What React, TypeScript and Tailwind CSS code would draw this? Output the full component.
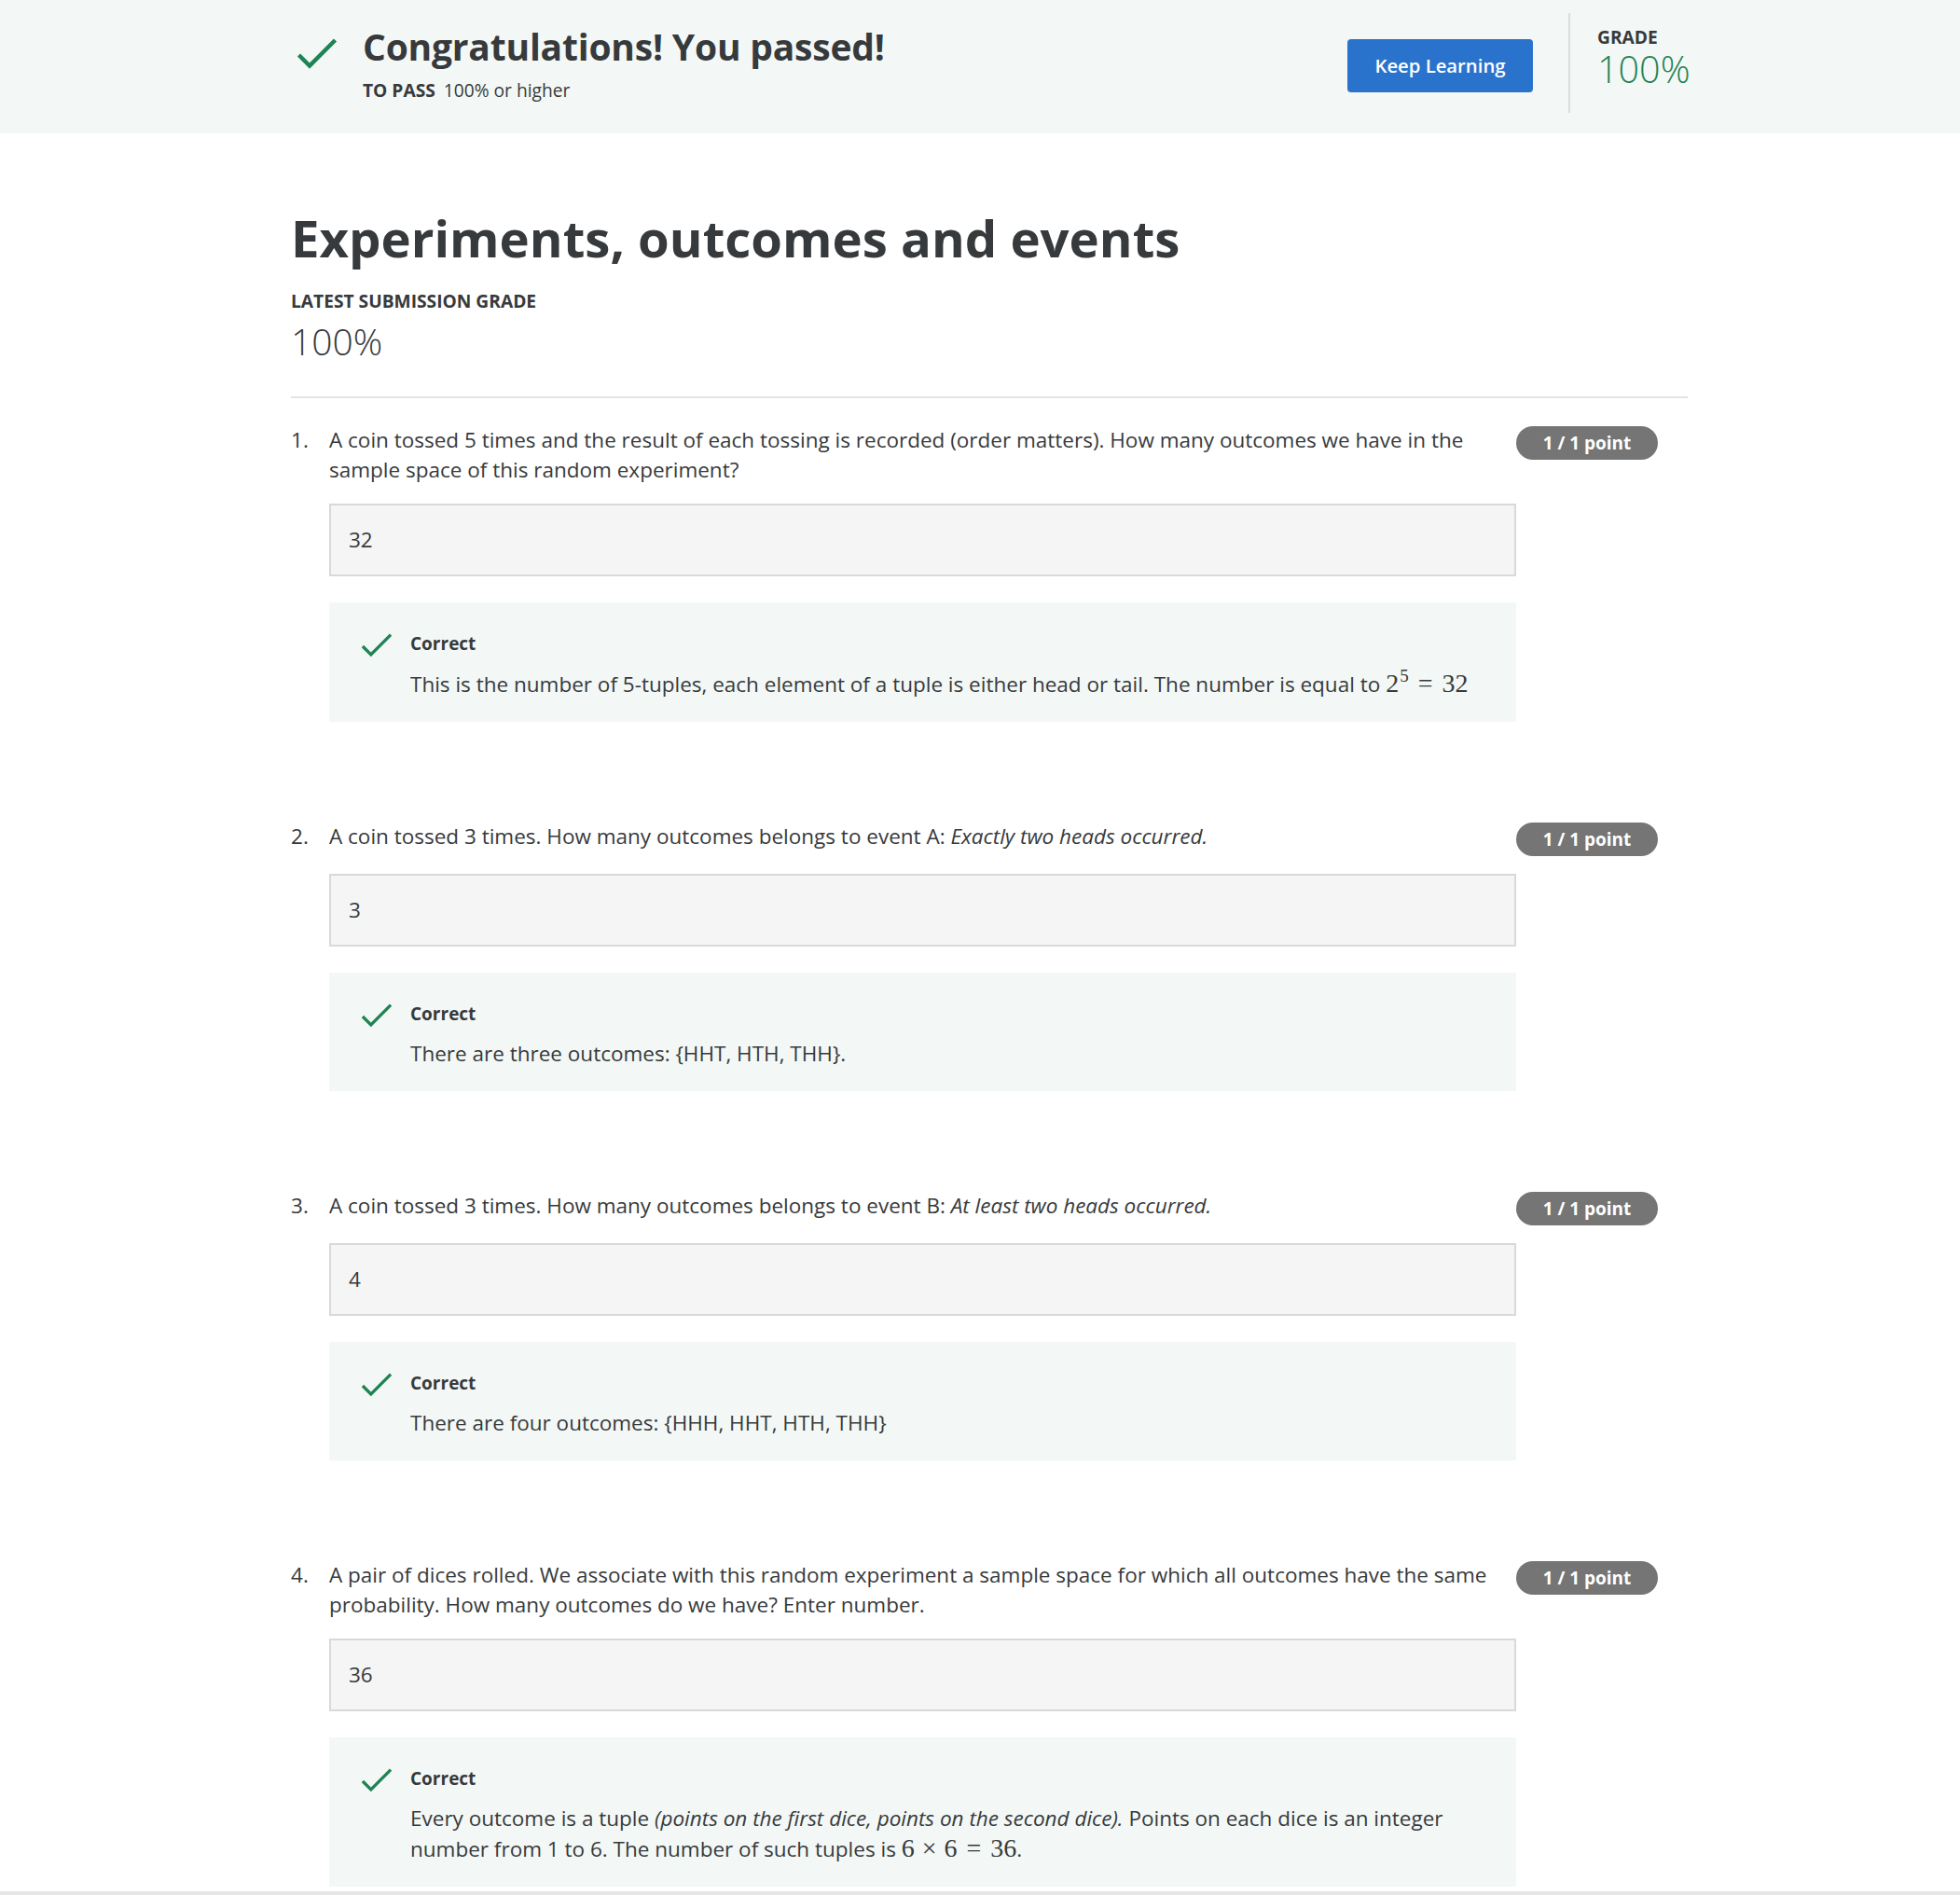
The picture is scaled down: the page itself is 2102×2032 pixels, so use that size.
import React from "react";

const GREEN = "#1f8354";

function Check({ w, h, stroke }: { w: number; h: number; stroke: number }) {
  return (
    <svg width={w} height={h} viewBox="0 0 44 34" fill="none" className="shrink-0">
      <path d="M2.5 19 L14 30.5 L41.5 3" stroke={GREEN} strokeWidth={stroke} strokeLinecap="butt" strokeLinejoin="miter" />
    </svg>
  );
}

function M({ children }: { children: React.ReactNode }) {
  return (
    <span className="text-[28px] leading-[32px]" style={{ fontFamily: '"Liberation Serif", "DejaVu Serif", serif' }}>
      {children}
    </span>
  );
}

type Q = {
  n: number;
  q: React.ReactNode;
  a: string;
  fb: React.ReactNode;
};

const questions: Q[] = [
  {
    n: 1,
    q: "A coin tossed 5 times and the result of each tossing is recorded (order matters). How many outcomes we have in the sample space of this random experiment?",
    a: "32",
    fb: (
      <>
        This is the number of 5-tuples, each element of a tuple is either head or tail. The number is equal to{" "}
        <M>
          2<span className="inline-block align-top text-[19px] leading-[19px] -mt-[2px] ml-[1px]">5</span>
          <span className="mx-[10px]">=</span>32
        </M>
      </>
    ),
  },
  {
    n: 2,
    q: (
      <>
        A coin tossed 3 times. How many outcomes belongs to event A: <i>Exactly two heads occurred.</i>
      </>
    ),
    a: "3",
    fb: "There are three outcomes: {HHT, HTH, THH}.",
  },
  {
    n: 3,
    q: (
      <>
        A coin tossed 3 times. How many outcomes belongs to event B: <i>At least two heads occurred.</i>
      </>
    ),
    a: "4",
    fb: "There are four outcomes: {HHH, HHT, HTH, THH}",
  },
  {
    n: 4,
    q: "A pair of dices rolled. We associate with this random experiment a sample space for which all outcomes have the same probability. How many outcomes do we have? Enter number.",
    a: "36",
    fb: (
      <>
        Every outcome is a tuple <i>(points on the first dice, points on the second dice).</i> Points on each dice is an integer
        number from 1 to 6. The number of such tuples is{" "}
        <M>
          6<span className="mx-[8px]">×</span>6<span className="mx-[10px]">=</span>36
        </M>
        .
      </>
    ),
  },
];

export default function App() {
  return (
    <div
      className="min-h-screen bg-white text-[#373a3c]"
      style={{ fontFamily: '"Open Sans", "Noto Sans", Arial, sans-serif' }}
    >
      {/* Banner */}
      <div className="bg-[#f3f8f6] h-[143px]">
        <div className="ml-[312px] w-[1498px] h-full flex items-start justify-between">
          <div className="flex items-start pt-[26px]">
            <div className="pl-[6px] pt-[14px]">
              <Check w={44} h={34} stroke={4.5} />
            </div>
            <div className="ml-[27px]">
              <div className="text-[39px] font-bold leading-[48px] tracking-[-0.2px]">Congratulations! You passed!</div>
              <div className="mt-[11px] text-[19.2px] leading-[24px]">
                <span className="font-bold">TO PASS</span>
                <span className="ml-[9px]">100% or higher</span>
              </div>
            </div>
          </div>
          <div className="flex items-start">
            <button className="mt-[42px] w-[199px] h-[57px] rounded-[4px] bg-[#2a73cc] text-white text-[20.3px] font-semibold">
              Keep Learning
            </button>
            <div className="ml-[38px] mt-[14px] w-[2px] h-[107px] bg-[#dcdcdc]" />
            <div className="ml-[29px] pt-[28px] w-[97px]">
              <div className="text-[19.2px] font-bold leading-[24px]">GRADE</div>
              <div className="text-[39.5px] leading-[44px] text-[#1f8354] font-light">100%</div>
            </div>
          </div>
        </div>
      </div>

      {/* Main */}
      <div className="ml-[312px] w-[1498px] pt-[79px]">
        <h1 className="text-[54.5px] font-bold leading-[67px]">Experiments, outcomes and events</h1>
        <div className="mt-[22px] text-[19.2px] font-bold leading-[24px]">LATEST SUBMISSION GRADE</div>
        <div className="mt-[9px] text-[39px] leading-[44px] font-light">100%</div>
        <div className="mt-[37px] h-[2px] bg-[#e4e4e4]" />

        <div className="pt-[29px] flex flex-col gap-[107px]">
          {questions.map((q) => (
            <div key={q.n} className="flex items-start">
              <div className="w-[41px] text-[22.5px] leading-[32px]">{q.n}.</div>
              <div className="w-[1273px]">
                <div className="text-[22.5px] leading-[32px] min-h-[36px]">{q.q}</div>
                <div className="mt-[20px] h-[78px] bg-[#f5f5f5] border-2 border-[#d9d9d9] flex items-center pl-[19px] text-[22.5px]">
                  {q.a}
                </div>
                <div className="mt-[28px] bg-[#f3f8f6] pl-[34px] pr-[34px] pt-[32px] pb-[24px] flex items-start">
                  <div>
                    <Check w={34} h={27} stroke={4.3} />
                  </div>
                  <div className="ml-[19px]">
                    <div className="text-[19px] font-bold leading-[24px]">Correct</div>
                    <div className="mt-[15px] text-[22.5px] leading-[32px]">{q.fb}</div>
                  </div>
                </div>
              </div>
              <div className="pt-[1px]">
                <div className="w-[152px] h-[36px] rounded-full bg-[#757575] text-white text-[19px] font-bold flex items-center justify-center">
                  1 / 1 point
                </div>
              </div>
            </div>
          ))}
        </div>
      </div>
      <div className="fixed bottom-0 left-0 right-0 h-[4px] bg-[#e6e6e6]" />
    </div>
  );
}
